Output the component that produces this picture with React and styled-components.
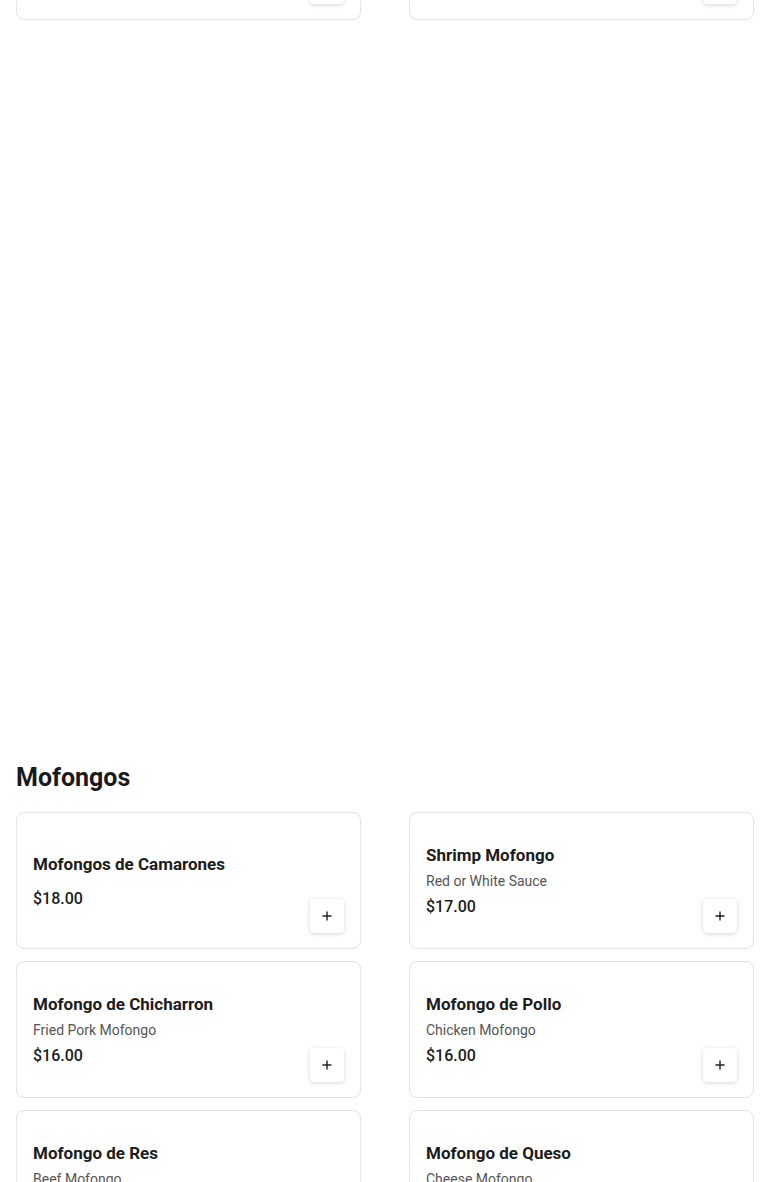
import React from "react";
import styled, { createGlobalStyle } from "styled-components";

const GlobalStyle = createGlobalStyle`
    * { box-sizing: border-box; }
    body {
        margin: 0;
        background: #ffffff;
        font-family: Roboto, "Liberation Sans", sans-serif;
        color: #1a1a1a;
    }
`;

const previous = [
    { name: "Tostones", price: "$6.00" },
    { name: "Maduros", price: "$6.00" },
];

const mofongos = [
    { name: "Mofongos de Camarones", price: "$18.00" },
    { name: "Shrimp Mofongo", desc: "Red or White Sauce", price: "$17.00" },
    { name: "Mofongo de Chicharron", desc: "Fried Pork Mofongo", price: "$16.00" },
    { name: "Mofongo de Pollo", desc: "Chicken Mofongo", price: "$16.00" },
    { name: "Mofongo de Res", desc: "Beef Mofongo", price: "$16.00" },
    { name: "Mofongo de Queso", desc: "Cheese Mofongo", price: "$14.00" },
];

const PlusIcon = () => (
    <svg width="12" height="12" viewBox="0 0 12 12">
        <path d="M6 1.5v9M1.5 6h9" stroke="#222" strokeWidth="1.4" />
    </svg>
);

const ItemCard = ({ item }) => (
    <Card>
        <Info>
            <Title>{item.name}</Title>
            {item.desc && <Desc>{item.desc}</Desc>}
            <Price $alone={!item.desc}>{item.price}</Price>
        </Info>
        <AddButton aria-label="Add">
            <PlusIcon />
        </AddButton>
    </Card>
);

const App = () => {
    return (
        <>
            <GlobalStyle />
            <Page>
                <Section>
                    <Grid>
                        {previous.map((item) => (
                            <ItemCard key={item.name} item={item} />
                        ))}
                    </Grid>
                </Section>
                <Blank />
                <Section>
                    <Heading>Mofongos</Heading>
                    <Grid>
                        {mofongos.map((item) => (
                            <ItemCard key={item.name} item={item} />
                        ))}
                    </Grid>
                </Section>
            </Page>
        </>
    );
};

export default App;

const Page = styled.div`
    margin-top: -117px;
    padding: 0 16px 40px;
`;

const Section = styled.section`
    display: flex;
    flex-direction: column;
`;

const Blank = styled.div`
    height: 742px;
`;

const Heading = styled.h2`
    margin: 0 0 18px;
    font-size: 25px;
    line-height: 32px;
    font-weight: 700;
    color: #1a1a1a;
`;

const Grid = styled.div`
    display: grid;
    grid-template-columns: 1fr 1fr;
    column-gap: 48px;
    row-gap: 12px;
`;

const Card = styled.div`
    height: 137px;
    border: 1px solid #e3e3e3;
    border-radius: 8px;
    background: #fff;
    padding: 0 16px 15px;
    display: flex;
    justify-content: space-between;
`;

const Info = styled.div`
    display: flex;
    flex-direction: column;
    justify-content: center;
    padding-top: 16px;
`;

const Title = styled.div`
    font-size: 17px;
    line-height: 24px;
    font-weight: 700;
    color: #1c1c1c;
    margin-bottom: 4px;
`;

const Desc = styled.div`
    font-size: 14px;
    line-height: 20px;
    font-weight: 400;
    color: #555;
`;

const Price = styled.div`
    margin-top: ${({ $alone }) => ($alone ? "7px" : "4px")};
    font-size: 16px;
    line-height: 24px;
    font-weight: 500;
    color: #1c1c1c;
`;

const AddButton = styled.button`
    align-self: flex-end;
    width: 34px;
    height: 34px;
    border: none;
    border-radius: 4px;
    background: #fff;
    box-shadow: 0 1px 4px rgba(0, 0, 0, 0.16);
    display: flex;
    align-items: center;
    justify-content: center;
    padding: 0;
    cursor: pointer;
`;
